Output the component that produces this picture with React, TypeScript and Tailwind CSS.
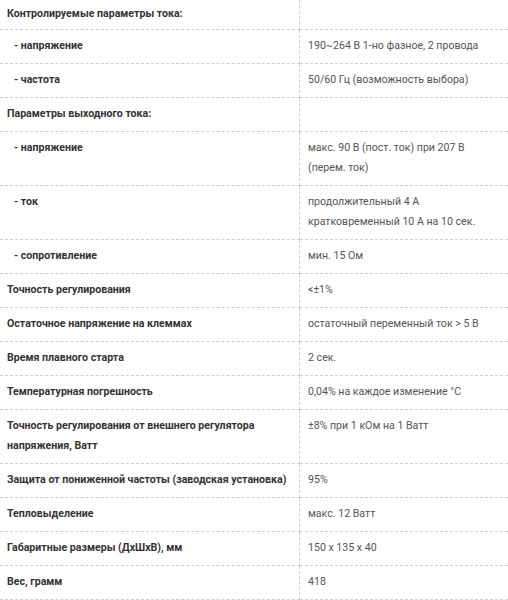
import React from "react"

type Row = {
  label: React.ReactNode
  value?: React.ReactNode
  sub?: boolean
}

const rows: Row[] = [
  { label: "Контролируемые параметры тока:" },
  { label: "- напряжение", value: "190~264 В 1-но фазное, 2 провода", sub: true },
  { label: "- частота", value: "50/60 Гц (возможность выбора)", sub: true },
  { label: "Параметры выходного тока:" },
  {
    label: "- напряжение",
    value: (
      <>
        макс. 90 В (пост. ток) при 207 В
        <br />
        (перем. ток)
      </>
    ),
    sub: true,
  },
  {
    label: "- ток",
    value: (
      <>
        продолжительный 4 А
        <br />
        кратковременный 10 А на 10 сек.
      </>
    ),
    sub: true,
  },
  { label: "- сопротивление", value: "мин. 15 Ом", sub: true },
  { label: "Точность регулирования", value: "<±1%" },
  { label: "Остаточное напряжение на клеммах", value: "остаточный переменный ток > 5 В" },
  { label: "Время плавного старта", value: "2 сек." },
  { label: "Температурная погрешность", value: "0,04% на каждое изменение °С" },
  {
    label: (
      <>
        Точность регулирования от внешнего регулятора
        <br />
        напряжения, Ватт
      </>
    ),
    value: "±8% при 1 кОм на 1 Ватт",
  },
  { label: "Защита от пониженной частоты (заводская установка)", value: "95%" },
  { label: "Тепловыделение", value: "макс. 12 Ватт" },
  { label: "Габаритные размеры (ДхШхВ), мм", value: "150 х 135 х 40" },
  { label: "Вес, грамм", value: "418" },
]

export default function App() {
  return (
    <div
      className="w-[508px] h-[600px] overflow-hidden bg-white text-[10.6px] leading-[20px]"
      style={{ fontFamily: "Roboto, 'Noto Sans', sans-serif" }}
    >
      <div className="grid grid-cols-[300px_1fr]">
        {rows.map((row, i) => {
          const first = i === 0
          const pad = first ? "pt-[4px] pb-[5px]" : "pt-[6px] pb-[7px]"
          return (
            <React.Fragment key={i}>
              <div
                className={`border-b border-r border-dashed border-[#cfcfcf] font-bold text-[#333333] ${pad} ${
                  row.sub ? "pl-[14px]" : "pl-[7px]"
                }`}
              >
                {row.label}
              </div>
              <div className={`border-b border-dashed border-[#cfcfcf] pl-[8px] text-[#555555] ${pad}`}>
                {row.value ?? "\u00a0"}
              </div>
            </React.Fragment>
          )
        })}
      </div>
    </div>
  )
}
